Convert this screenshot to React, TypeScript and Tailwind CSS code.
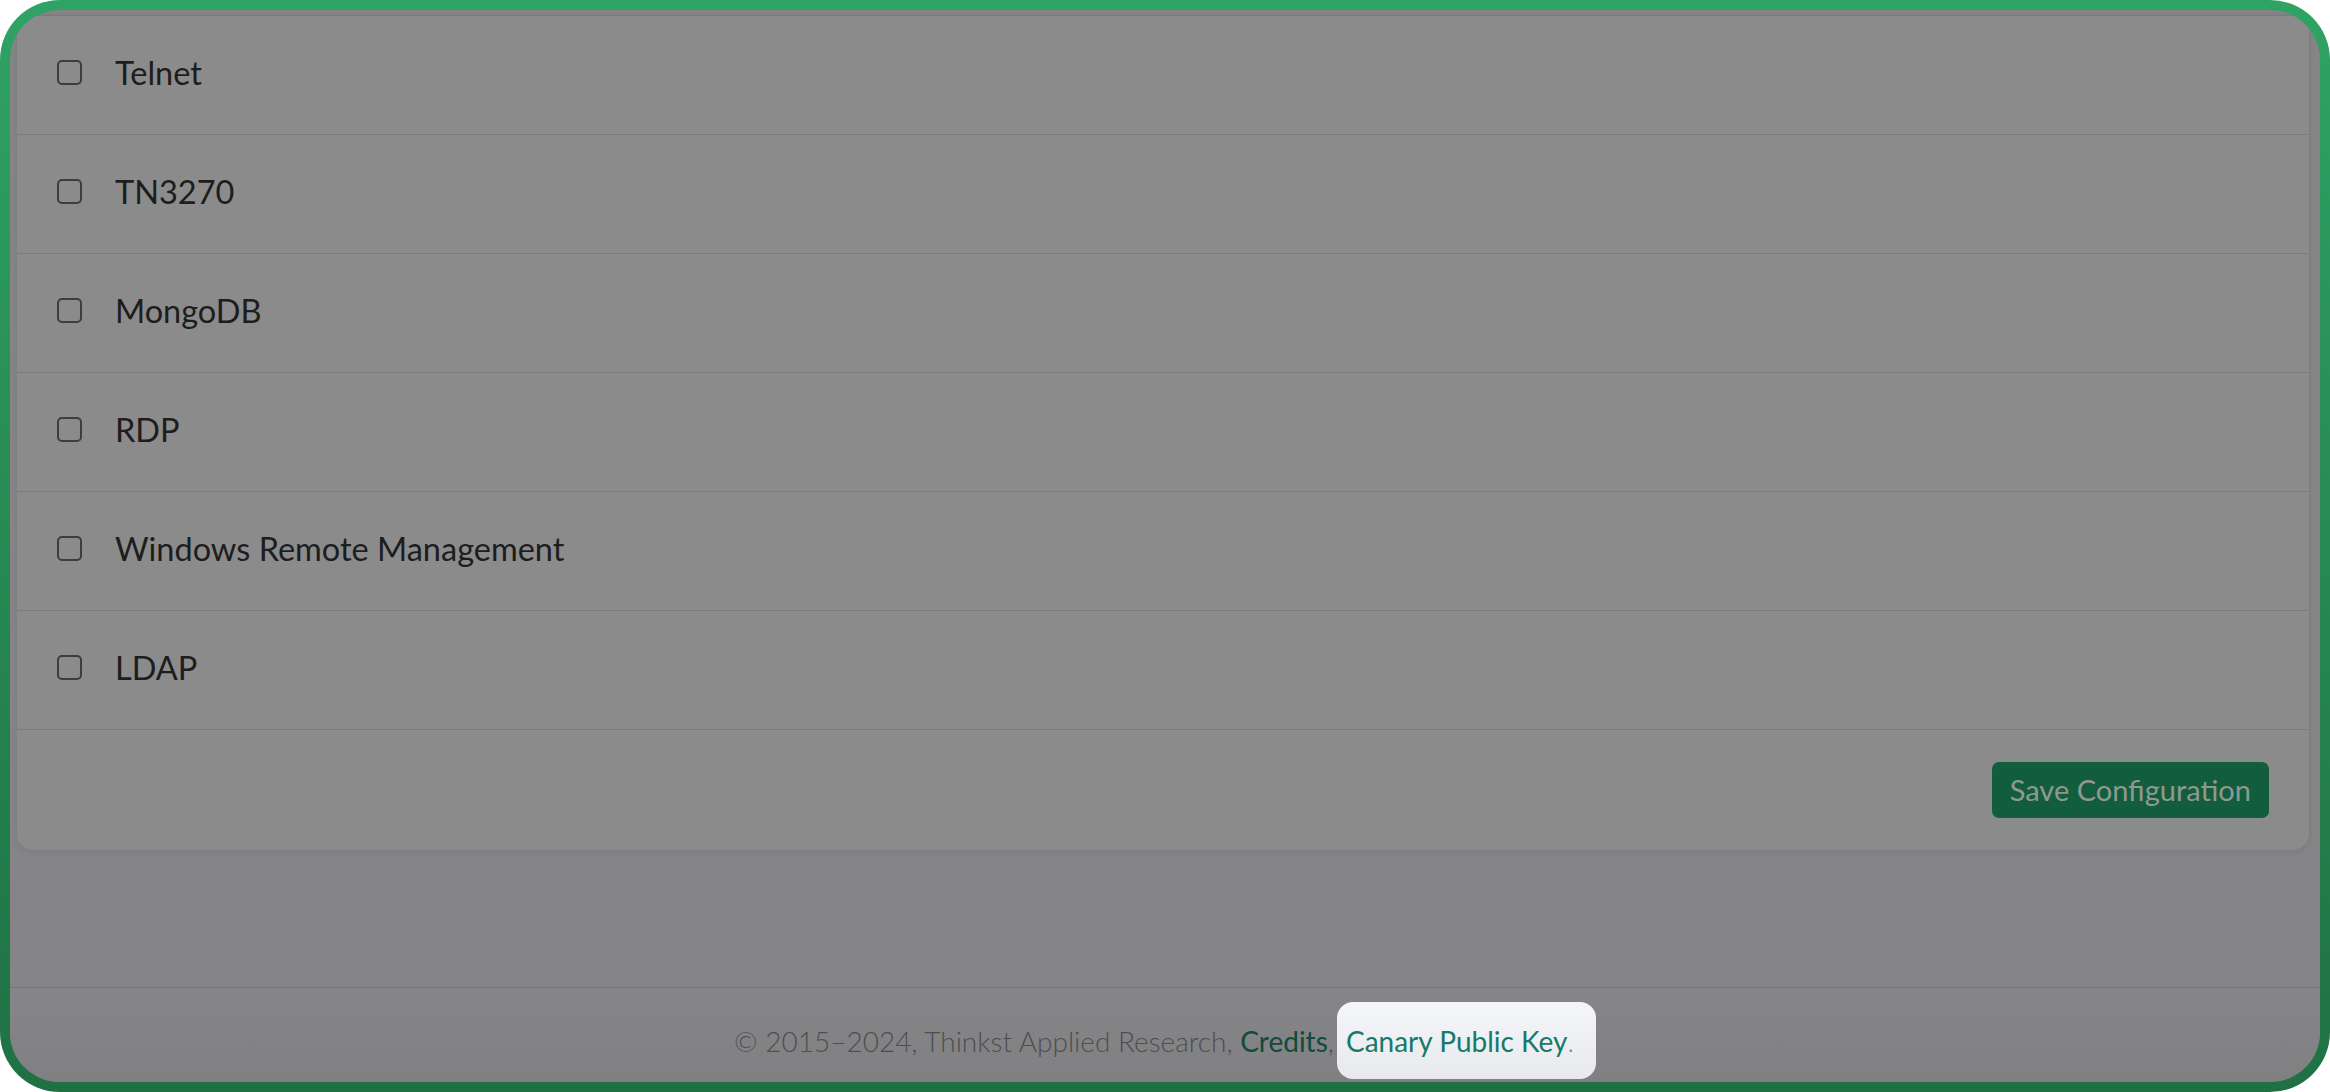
const services = [
  "Telnet",
  "TN3270",
  "MongoDB",
  "RDP",
  "Windows Remote Management",
  "LDAP",
];

export default function App() {
  return (
    <div
      className="h-[1092px] w-[2330px] bg-white"
      style={{ fontFamily: "Lato, 'Open Sans', sans-serif" }}
    >
      <div className="h-full w-full rounded-[60px] bg-gradient-to-b from-[#2fa364] to-[#1f7143] p-[10px]">
        <div className="flex h-full w-full flex-col overflow-hidden rounded-[50px] bg-[#858587]">
          <div className="pl-[7px] pr-[11px] pt-[5px]">
            <section className="rounded-b-[16px] bg-[#8b8b8b] shadow-[0_2px_6px_rgba(0,0,0,0.08)]">
              <div className="h-px bg-[#7b7b7b]" />
              {services.map((name) => (
                <label
                  key={name}
                  className="flex h-[119px] items-center border-b border-[#7b7b7b] pb-[3px] pl-[40px]"
                >
                  <span className="mb-[3px] h-[25px] w-[25px] rounded-[5px] border-2 border-[#3d3d3d]" />
                  <span className="ml-[33px] text-[32.5px] text-[#1d1d1d]">
                    {name}
                  </span>
                </label>
              ))}
              <div className="flex justify-end px-[40px] py-[32px]">
                <button
                  type="button"
                  className="h-[56px] rounded-[7px] bg-[#125e3c] px-[18px] text-[29px] text-[#8f9893]"
                >
                  Save Configuration
                </button>
              </div>
            </section>
          </div>

          <footer className="mt-auto h-[95px] border-t border-[#777779] bg-gradient-to-b from-[#868688] to-[#808082] pt-[14px] text-center">
            <p className="text-[28px] font-light leading-[70px] text-[#4e4e50]">
              © 2015–2024, Thinkst Applied Research,{" "}
              <a className="font-normal text-[#0f4c3a]">Credits</a>,
              <span className="ml-[3px] inline-block rounded-[16px] bg-gradient-to-b from-[#f5f6f9] to-[#e8e9ed] pb-[3px] pl-[9px] pr-[22px] pt-[4px] leading-[70px]">
                <a className="font-normal text-[#17796a]">Canary Public Key</a>
                <span className="text-[#8a8a8a]">.</span>
              </span>
            </p>
          </footer>
        </div>
      </div>
    </div>
  );
}
